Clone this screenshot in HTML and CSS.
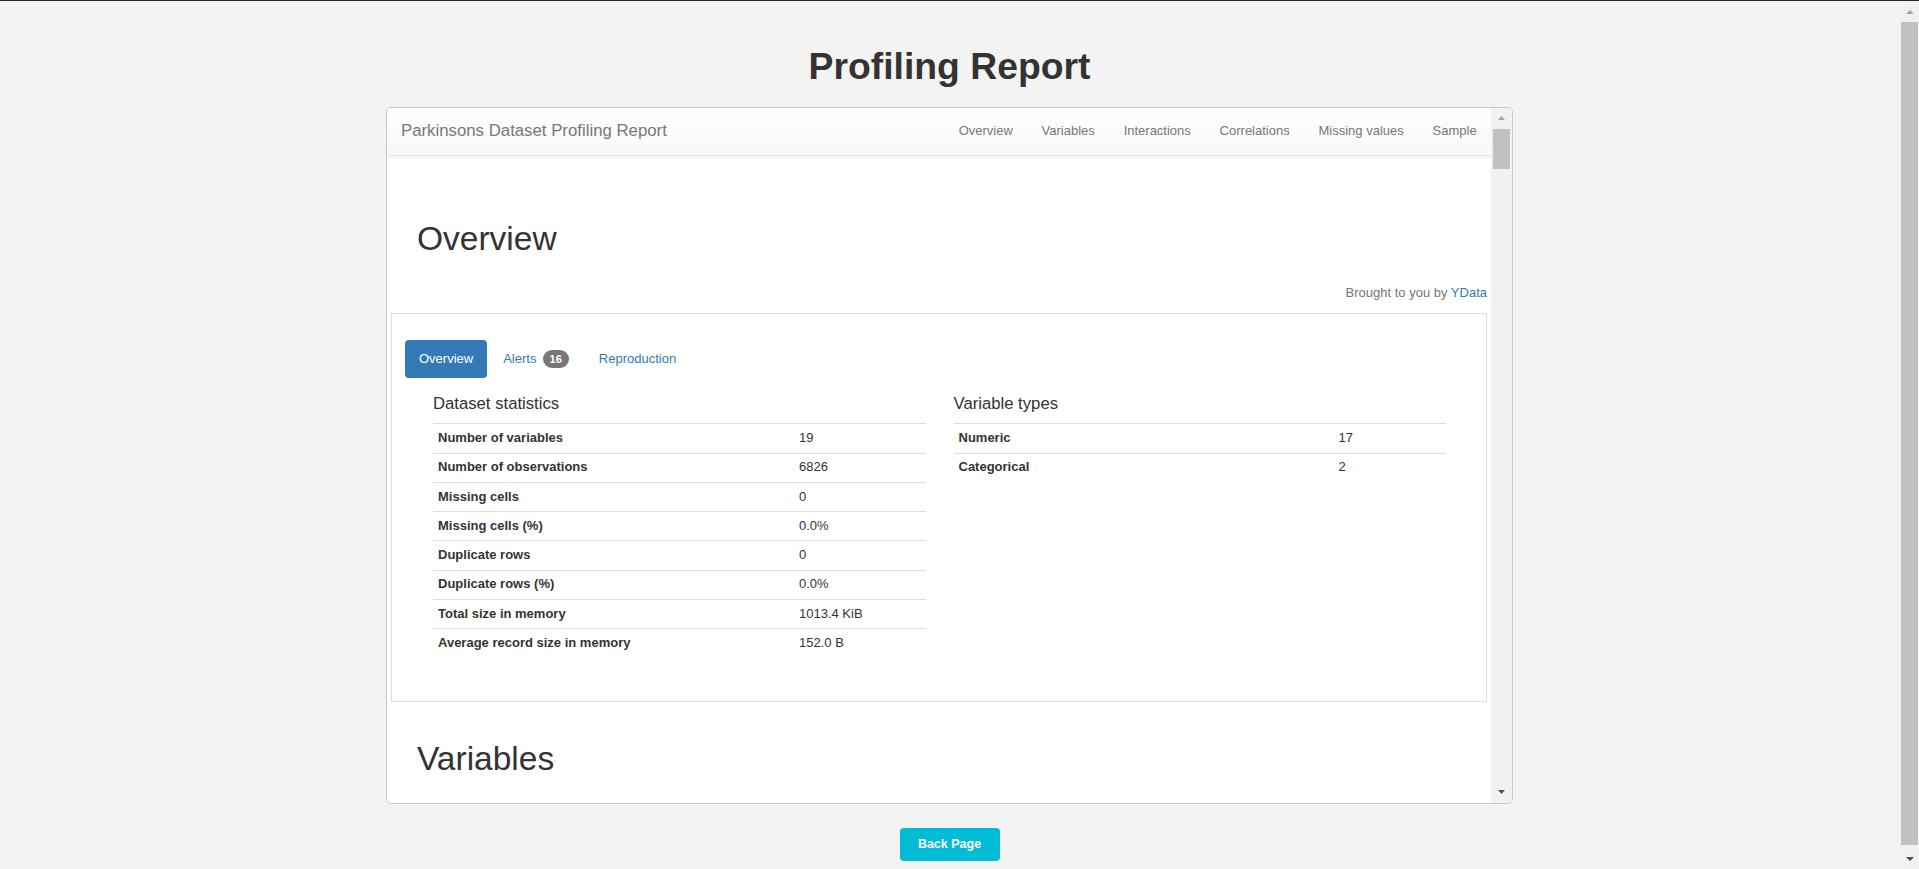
FILE: index.html
```html
<!DOCTYPE html>
<html lang="en">
<head>
<meta charset="utf-8">
<title>Profiling Report</title>
<link rel="stylesheet" href="styles.css">
</head>
<body>
<div class="topline"></div>
<div class="shell">
  <main class="page">
    <h1 class="title">Profiling Report</h1>
    <div class="frame">
      <div class="report">
        <nav class="navbar">
          <span class="brand">Parkinsons Dataset Profiling Report</span>
          <ul class="navlinks">
            <li>Overview</li>
            <li>Variables</li>
            <li>Interactions</li>
            <li>Correlations</li>
            <li>Missing values</li>
            <li>Sample</li>
          </ul>
        </nav>
        <div class="content">
          <h1 class="section-title">Overview</h1>
          <p class="credit">Brought to you by <a class="link">YData</a></p>
          <div class="tabbox">
            <ul class="pills">
              <li class="pill active">Overview</li>
              <li class="pill">Alerts <span class="badge">16</span></li>
              <li class="pill">Reproduction</li>
            </ul>
            <div class="cols">
              <div class="col">
                <h4 class="col-title">Dataset statistics</h4>
                <table class="stats stats-left">
                  <tr><th>Number of variables</th><td>19</td></tr>
                  <tr><th>Number of observations</th><td>6826</td></tr>
                  <tr><th>Missing cells</th><td>0</td></tr>
                  <tr><th>Missing cells (%)</th><td>0.0%</td></tr>
                  <tr><th>Duplicate rows</th><td>0</td></tr>
                  <tr><th>Duplicate rows (%)</th><td>0.0%</td></tr>
                  <tr><th>Total size in memory</th><td>1013.4 KiB</td></tr>
                  <tr><th>Average record size in memory</th><td>152.0 B</td></tr>
                </table>
              </div>
              <div class="col">
                <h4 class="col-title">Variable types</h4>
                <table class="stats stats-right">
                  <tr><th>Numeric</th><td>17</td></tr>
                  <tr><th>Categorical</th><td>2</td></tr>
                </table>
              </div>
            </div>
          </div>
          <h1 class="section-title variables">Variables</h1>
        </div>
      </div>
      <div class="iscroll">
        <div class="sbtn">
          <svg width="7" height="4" viewBox="0 0 7 4"><polygon points="3.5,0 7,4 0,4" fill="#a3a3a3"/></svg>
        </div>
        <div class="ithumb"></div>
        <div class="sfill"></div>
        <div class="sbtn">
          <svg width="7" height="4" viewBox="0 0 7 4"><polygon points="0,0 7,0 3.5,4" fill="#505050"/></svg>
        </div>
      </div>
    </div>
    <div class="actions">
      <button class="back" type="button">Back Page</button>
    </div>
  </main>
  <div class="vscroll">
    <div class="vbtn up">
      <svg width="8" height="4" viewBox="0 0 8 4"><polygon points="4,0 8,4 0,4" fill="#a3a3a3"/></svg>
    </div>
    <div class="vthumb"></div>
    <div class="sfill"></div>
    <div class="vbtn down">
      <svg width="8" height="4" viewBox="0 0 8 4"><polygon points="0,0 8,0 4,4" fill="#505050"/></svg>
    </div>
  </div>
</div>
</body>
</html>
```

FILE: styles.css
```css
* {
  box-sizing: border-box;
}

html, body {
  margin: 0;
  padding: 0;
  height: 869px;
  overflow: hidden;
}

body {
  background: #f3f3f3;
  font-family: "Liberation Sans", Arial, Helvetica, sans-serif;
  color: #333;
}

.topline {
  height: 1px;
  background: #262626;
}

.shell {
  display: grid;
  grid-template-columns: 1fr 19px;
  height: 868px;
}

.page {
  min-width: 0;
  display: flex;
  flex-direction: column;
  align-items: center;
  padding-right: 1px;
}

.title {
  margin: 43.4px 0 0;
  font-size: 37.3px;
  line-height: 44px;
  font-weight: 700;
  color: #333;
}

.frame {
  margin-top: 18.6px;
  width: 1127px;
  height: 697px;
  border: 1px solid #c8c8c8;
  border-radius: 5px;
  background: #fff;
  overflow: hidden;
  display: flex;
  flex-shrink: 0;
}

.report {
  flex: 1;
  min-width: 0;
  overflow: hidden;
}

.navbar {
  height: 48px;
  display: flex;
  align-items: center;
  justify-content: space-between;
  background: linear-gradient(to bottom, #ffffff 0%, #f8f8f8 100%);
  border-bottom: 1px solid #e4e4e4;
  box-shadow: 0 1px 5px rgba(0, 0, 0, 0.075);
  padding-bottom: 1px;
}

.brand {
  padding-left: 14px;
  font-size: 16.8px;
  line-height: 20px;
  color: #777;
}

.navlinks {
  display: flex;
  margin: 0;
  padding: 0;
  list-style: none;
}

.navlinks li {
  padding: 0 14.4px;
  font-size: 13px;
  line-height: 18px;
  color: #777;
}

.content {
  padding: 0 4px;
}

.section-title {
  margin: 63px 0 0;
  padding-left: 26px;
  font-size: 33.5px;
  line-height: 40px;
  font-weight: 500;
  color: #333;
}

.section-title.variables {
  margin-top: 37.6px;
}

.credit {
  margin: 24.7px 0 0;
  text-align: right;
  font-size: 13px;
  line-height: 18px;
  color: #777;
}

.link {
  color: #337ab7;
  text-decoration: none;
}

.tabbox {
  margin-top: 11.2px;
  border: 1px solid #dedede;
  padding: 26px 13px 43.3px;
}

.pills {
  display: flex;
  margin: 0;
  padding: 0;
  list-style: none;
}

.pill {
  height: 38px;
  padding: 0 14px;
  margin-right: 2px;
  display: flex;
  align-items: center;
  font-size: 13px;
  color: #337ab7;
  border-radius: 4px;
  white-space: pre;
}

.pill.active {
  background: #337ab7;
  color: #fff;
}

.badge {
  display: inline-block;
  height: 18px;
  min-width: 26px;
  margin-left: 2.5px;
  padding: 0 7px;
  border-radius: 9px;
  background: #777;
  color: #fff;
  font-size: 11px;
  font-weight: 700;
  line-height: 18px;
  text-align: center;
}

.cols {
  display: grid;
  grid-template-columns: 1fr 1fr;
  column-gap: 28px;
  padding: 0 27px 0 28px;
  margin-top: 16.2px;
}

.col-title {
  margin: 0 0 9.3px;
  font-size: 16.7px;
  line-height: 20px;
  font-weight: 500;
  color: #333;
}

.stats {
  width: 100%;
  border-collapse: collapse;
  table-layout: fixed;
  font-size: 13px;
  line-height: 18.3px;
  color: #333;
}

.stats th,
.stats td {
  padding: 4.6px 5px 5.4px;
  border-top: 1px solid #dddddd;
  text-align: left;
  vertical-align: top;
}

.stats th {
  font-weight: 700;
}

.stats-left th {
  width: 361px;
}

.stats-right th {
  width: 380px;
}

.iscroll {
  width: 21px;
  flex-shrink: 0;
  background: #f1f1f1;
  display: flex;
  flex-direction: column;
}

.sbtn {
  height: 21px;
  display: flex;
  align-items: center;
  justify-content: center;
}

.ithumb {
  height: 40px;
  margin: 0 2px;
  background: #c1c1c1;
}

.sfill {
  flex: 1;
}

.actions {
  margin-top: 24px;
}

.back {
  width: 100px;
  height: 33px;
  border: 0;
  border-radius: 4px;
  background: #00bcd4;
  color: #fff;
  font-family: "Liberation Sans", Arial, Helvetica, sans-serif;
  font-size: 12.5px;
  font-weight: 700;
  padding: 0;
}

.vscroll {
  background: #f1f1f1;
  display: flex;
  flex-direction: column;
}

.vbtn {
  display: flex;
  align-items: center;
  justify-content: center;
}

.vbtn.up {
  height: 21px;
}

.vbtn.down {
  height: 21px;
}

.vthumb {
  height: 823px;
  margin: 0 1px;
  background: #c1c1c1;
}
```
